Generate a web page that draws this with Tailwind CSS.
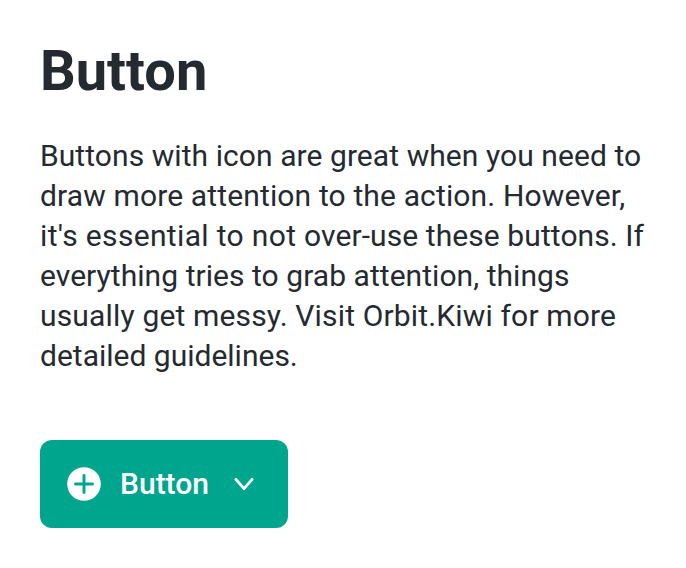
<!DOCTYPE html>
<html lang="en"><head><meta charset="utf-8"><title>Button</title>
<script src="https://cdn.jsdelivr.net/npm/@tailwindcss/browser@4"></script></head>
<body class="bg-white text-[#252a31] font-['Roboto',sans-serif]">
<main class="flex flex-col items-start px-10 pt-[39px]">
<h1 class="text-[56px] leading-[64px] font-bold">Button</h1>
<p class="mt-[33px] text-[30px] leading-10 whitespace-nowrap"><span class="tracking-[0.07px]">Buttons with icon are great when you need to</span><br><span class="tracking-[0.14px]">draw more attention to the action. However,</span><br><span class="tracking-[0.34px]">it's essential to not </span><span class="tracking-[0.08px]">over-use these buttons. If</span><br><span class="tracking-[0.05px]">everything tries to grab attention, things</span><br><span class="tracking-[0.16px]">usually get messy. Visit Orbit.Kiwi for more</span><br>detailed guidelines.</p>
<button class="mt-16 flex h-[88px] w-[248px] items-center rounded-xl bg-[#00a58e] pl-6 text-[30px] font-medium text-white">
<svg class="size-10 shrink-0" viewBox="0 0 40 40" fill="none"><circle cx="20" cy="20" r="16.8" fill="#fff"/><path d="M20 11.5v17M11.5 20h17" stroke="#00a58e" stroke-width="2.9" stroke-linecap="round"/></svg>
<span class="ml-4 w-[88px] pb-0.5">Button</span>
<svg class="ml-4 size-10 shrink-0" viewBox="0 0 40 40" fill="none" stroke="#fff" stroke-width="2.8" stroke-linecap="round" stroke-linejoin="round"><path d="m11.9 15.3 8.1 9.3 8.1-9.3"/></svg>
</button>
</main></body></html>
